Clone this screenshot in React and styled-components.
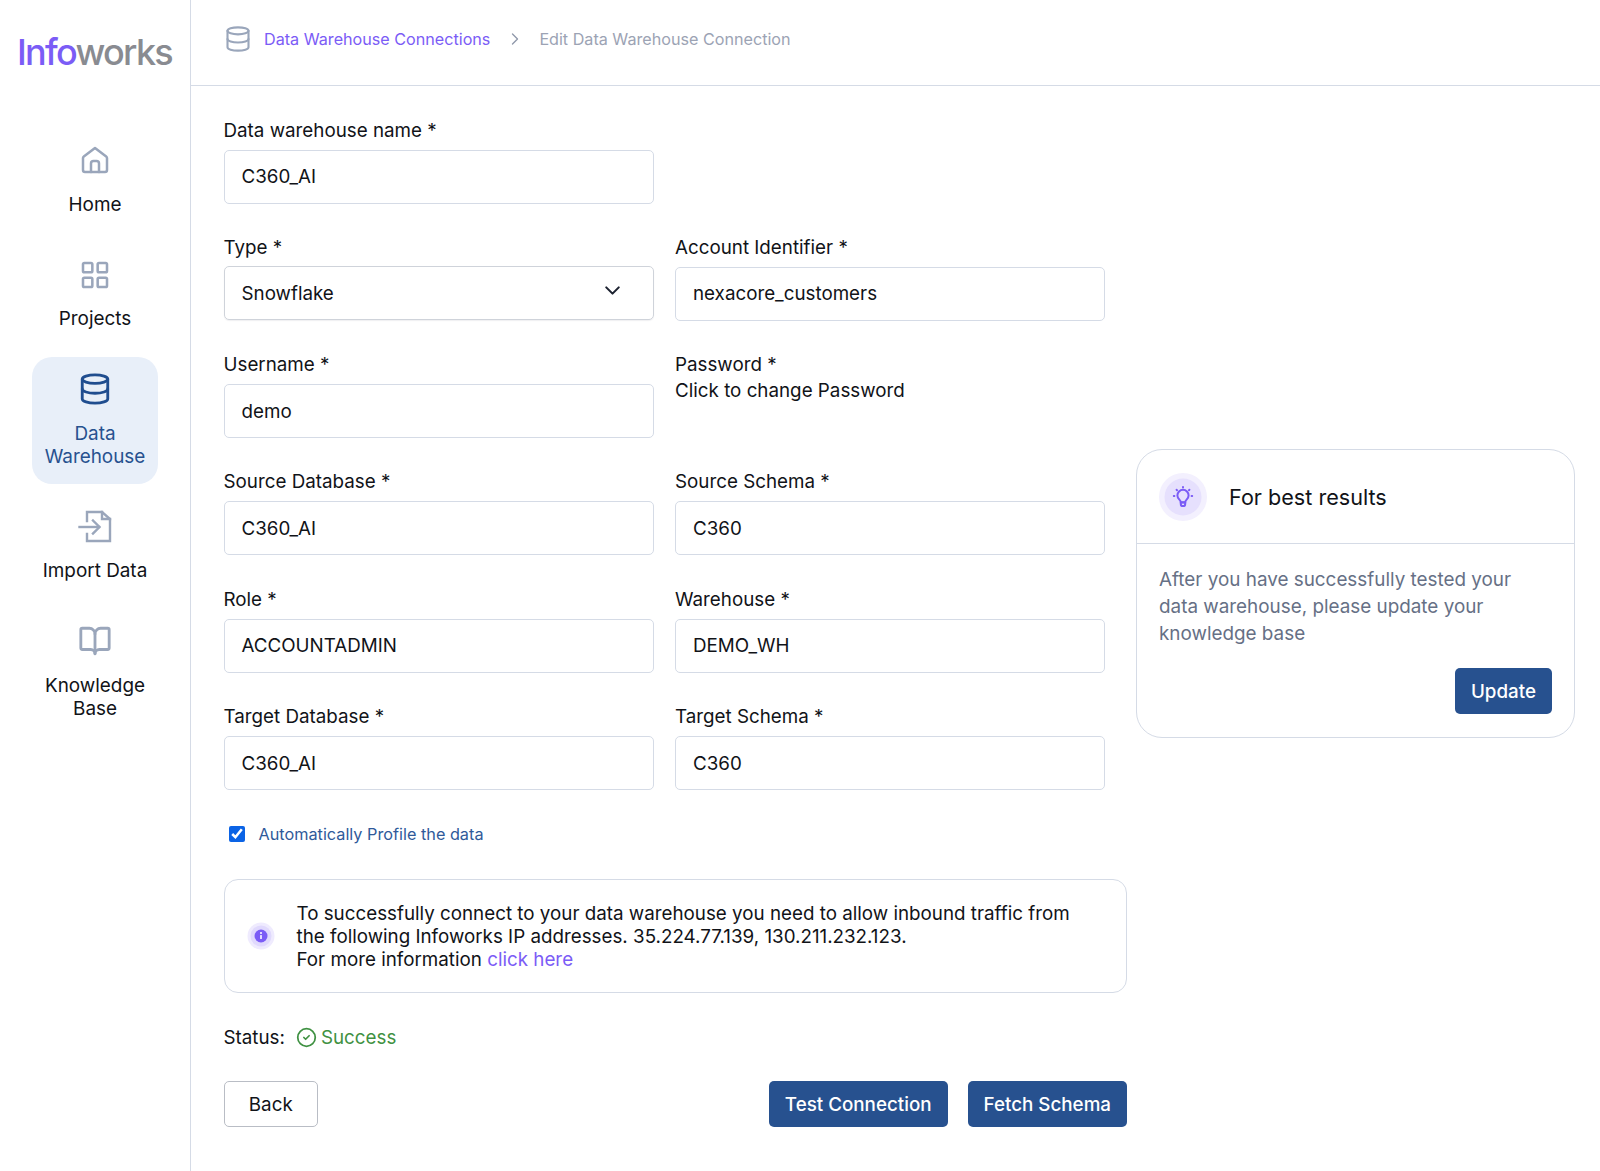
import React from "react";
import styled, { createGlobalStyle } from "styled-components";
import { ChevronDown, ChevronRight, CircleCheck, Database, LayoutGrid, BookOpen } from "lucide-react";

const GlobalStyle = createGlobalStyle`
  html, body { margin: 0; padding: 0; background: #fff; }
  body { font-family: Inter, "Noto Sans", sans-serif; color: #111318; }
  * { box-sizing: border-box; }
`;

const Page = styled.div`
  display: flex;
  width: 1600px;
  height: 1171px;
  overflow: hidden;
`;

const Sidebar = styled.aside`
  flex: 0 0 191px;
  border-right: 1.5px solid #d5dbe6;
  display: flex;
  flex-direction: column;
  align-items: center;
`;

const Logo = styled.div`
  height: 102px;
  width: 100%;
  padding: 30px 0 0 17px;
  font-size: 36px;
  line-height: 44px;
  font-weight: 500;
  letter-spacing: -1.7px;
  color: #898b91;
  span { color: #7b5cf6; }
`;

const Nav = styled.nav`
  display: flex;
  flex-direction: column;
  align-items: center;
  width: 126px;
`;

const NavItem = styled.a`
  display: flex;
  flex-direction: column;
  align-items: center;
  width: 126px;
  flex: none;
  height: ${(p) => p.$h}px;
  padding-top: ${(p) => p.$top}px;
  border-radius: 20px;
  background: ${(p) => (p.$active ? "#e8eff9" : "transparent")};
  color: ${(p) => (p.$active ? "#27518f" : "#111318")};
  font-size: 18.9px;
  line-height: 23px;
  text-align: center;
  svg {
    flex: none;
    display: block;
    color: ${(p) => (p.$active ? "#1f4d8f" : "#9aa6bb")};
    margin-bottom: ${(p) => p.$gap}px;
  }
`;

const Main = styled.main`
  flex: 1;
  display: flex;
  flex-direction: column;
`;

const TopBar = styled.header`
  height: 86px;
  flex: none;
  border-bottom: 1.5px solid #d5dbe6;
  display: flex;
  align-items: center;
  padding: 0 0 7px 33px;
  font-size: 16.15px;
  color: #9ca3b4;
`;

const CrumbIcon = styled.span`
  display: flex;
  color: #9aa6bb;
  margin-right: 12px;
`;

const CrumbLink = styled.a`
  color: #7b5cf6;
`;

const CrumbSep = styled.span`
  display: flex;
  margin: 0 14px 0 15px;
  color: #8f98aa;
`;

const Content = styled.div`
  display: flex;
  padding: 32.6px 0 0 32.5px;
`;

const FormColumn = styled.section`
  width: 903.5px;
  flex: none;
`;

const FieldGrid = styled.div`
  display: grid;
  grid-template-columns: 430px 430px;
  column-gap: 21.5px;
  grid-auto-rows: 117.3px;
`;

const Field = styled.div`
  display: flex;
  flex-direction: column;
`;

const Label = styled.label`
  font-size: 18.8px;
  line-height: 24px;
  height: 31px;
`;

const PasswordLabel = styled(Label)`
  height: 25px;
`;

const Hint = styled.div`
  font-size: 18.8px;
  line-height: 26px;
`;

const InputBox = styled.div`
  height: 54px;
  border: 1.5px solid #d5dbe6;
  border-radius: 5px;
  padding: 0 17px;
  display: flex;
  align-items: center;
  justify-content: space-between;
  font-size: 18.8px;
`;

const SelectBox = styled(InputBox)`
  margin-top: -1px;
  padding-top: 2px;
  padding-right: 28px;
  border-color: #cfd3da;
  box-shadow: 0 1px 1px rgba(60, 70, 90, 0.08);
  svg { color: #1c2230; margin-top: -7px; }
`;

const CheckRow = styled.label`
  display: flex;
  align-items: center;
  margin: 0 0 0 5px;
  height: 24px;
  font-size: 16.25px;
  color: #2f5a9a;
  input {
    width: 16px;
    height: 16px;
    margin: 0 14px 0 0;
    accent-color: #0b63e5;
  }
`;

const InfoBox = styled.div`
  margin-top: 33px;
  height: 114px;
  border: 1.5px solid #d5dbe6;
  border-radius: 14px;
  display: flex;
  align-items: center;
  padding: 0 20px 0 22px;
  font-size: 18.8px;
  line-height: 23px;
`;

const InfoIcon = styled.span`
  flex: none;
  width: 28px;
  height: 28px;
  margin-right: 22px;
  display: block;
`;

const TextLink = styled.a`
  color: #7b5cf6;
`;

const StatusRow = styled.div`
  display: flex;
  align-items: center;
  margin-top: 32px;
  height: 24px;
  font-size: 18.8px;
`;

const StatusValue = styled.span`
  display: flex;
  align-items: center;
  gap: 4px;
  margin-left: 11px;
  color: #3f9142;
`;

const ActionRow = styled.div`
  display: flex;
  margin-top: 32px;
  gap: 20px;
`;

const Button = styled.button`
  height: 46px;
  padding: 0 16px;
  border-radius: 5px;
  border: none;
  background: #27518f;
  color: #fff;
  font-family: inherit;
  font-size: 18.8px;
  font-weight: 500;
`;

const BackButton = styled(Button)`
  width: 94.5px;
  margin-right: auto;
  padding: 0;
  background: #fff;
  color: #111318;
  font-weight: 400;
  border: 1.5px solid #b9bdc5;
`;

const TipCard = styled.aside`
  flex: none;
  width: 439px;
  height: 289px;
  margin: 330.5px 0 0 9px;
  border: 1.5px solid #d5dbe6;
  border-radius: 26px;
  display: flex;
  flex-direction: column;
`;

const TipHeader = styled.div`
  height: 94px;
  flex: none;
  display: flex;
  align-items: center;
  padding-left: 22px;
  border-bottom: 1.5px solid #d5dbe6;
  font-size: 21.6px;
`;

const TipIcon = styled.span`
  display: block;
  flex: none;
  width: 48px;
  height: 48px;
  margin-right: 22px;
`;

const TipBody = styled.p`
  margin: 0;
  padding: 22px 22px 0;
  font-size: 18.87px;
  line-height: 27px;
  color: #667085;
`;

const TipFooter = styled.div`
  display: flex;
  justify-content: flex-end;
  padding: 21px 22px 0 0;
`;

const HomeIcon = () => (
  <svg width="30" height="30" viewBox="0 0 30 30" fill="none" stroke="currentColor" strokeWidth="2.5" strokeLinejoin="round" strokeLinecap="round">
    <path d="M15 3 L3.8 11.5 a2 2 0 0 0 -.8 1.6 V25 a2 2 0 0 0 2 2 H25 a2 2 0 0 0 2 -2 V13.1 a2 2 0 0 0 -.8 -1.6 Z" />
    <path d="M11 27 V18.5 a2.5 2.5 0 0 1 2.5 -2.5 h3 a2.5 2.5 0 0 1 2.5 2.5 V27" />
  </svg>
);

const ImportIcon = () => (
  <svg width="34" height="34" viewBox="0 0 34 34" fill="none" stroke="currentColor" strokeWidth="2.4" strokeLinejoin="miter" strokeLinecap="square">
    <path d="M9 11 V2 H24 L32 9 V31 H9 V24" />
    <path d="M24 2 V9 H32" />
    <path d="M1.5 17 H21" />
    <path d="M15 10.5 L21.5 17 L15 23.5" />
  </svg>
);

const BulbBadge = () => (
  <svg width="48" height="48" viewBox="0 0 48 48" fill="none">
    <circle cx="24" cy="24" r="24" fill="#f3f0fe" />
    <circle cx="24" cy="24" r="18.5" fill="#e6e0fd" />
    <g stroke="#7b5cf6" strokeWidth="2" strokeLinecap="round" fill="none">
      <path d="M21.8 29.2 c0 -2.4 -3.4 -3 -3.4 -6.8 a5.6 5.6 0 0 1 11.2 0 c0 3.8 -3.4 4.4 -3.4 6.8 Z" />
      <path d="M21.8 29.5 h4.4 v1.4 a2.2 2.2 0 0 1 -4.4 0 Z" />
      <path d="M24 14 v.6 M14.8 23 h.6 M32.6 23 h.6 M17.6 16.8 l.4 .4 M30.4 16.8 l-.4 .4" />
    </g>
  </svg>
);

const InfoBadge = () => (
  <svg width="28" height="28" viewBox="0 0 28 28">
    <circle cx="14" cy="14" r="13.5" fill="#efebfe" />
    <circle cx="14" cy="14" r="10.5" fill="#e0d9fd" />
    <circle cx="14" cy="14" r="6.5" fill="#7b5cf6" />
    <rect x="13.2" y="13" width="1.6" height="4" rx=".6" fill="#fff" />
    <circle cx="14" cy="11" r="1" fill="#fff" />
  </svg>
);

const fields = [
  ["Type *", "Snowflake", "Account Identifier *", "nexacore_customers"],
  ["Username *", "demo", "Password *", null],
  ["Source Database *", "C360_AI", "Source Schema *", "C360"],
  ["Role *", "ACCOUNTADMIN", "Warehouse *", "DEMO_WH"],
  ["Target Database *", "C360_AI", "Target Schema *", "C360"],
];

export default function App() {
  return (
    <Page>
      <GlobalStyle />
      <Sidebar>
        <Logo><span>Info</span>works</Logo>
        <Nav>
          <NavItem $h={114} $top={43} $gap={18}><HomeIcon />Home</NavItem>
          <NavItem $h={141} $top={43} $gap={16}><LayoutGrid size={32} strokeWidth={1.9} />Projects</NavItem>
          <NavItem $active $h={127} $top={15} $gap={16}><Database size={34} strokeWidth={2} />Data<br />Warehouse</NavItem>
          <NavItem $h={114} $top={26} $gap={15}><ImportIcon />Import Data</NavItem>
          <NavItem $h={127} $top={26} $gap={16}><BookOpen size={34} strokeWidth={2} />Knowledge<br />Base</NavItem>
        </Nav>
      </Sidebar>
      <Main>
        <TopBar>
          <CrumbIcon><Database size={28} strokeWidth={1.8} /></CrumbIcon>
          <CrumbLink>Data Warehouse Connections</CrumbLink>
          <CrumbSep><ChevronRight size={20} strokeWidth={1.6} /></CrumbSep>
          <span>Edit Data Warehouse Connection</span>
        </TopBar>
        <Content>
          <FormColumn>
            <FieldGrid>
              <Field>
                <Label>Data warehouse name *</Label>
                <InputBox>C360_AI</InputBox>
              </Field>
              <div />
              {fields.map(([l1, v1, l2, v2]) => (
                <React.Fragment key={l1}>
                  <Field>
                    <Label>{l1}</Label>
                    {l1 === "Type *" ? (
                      <SelectBox>{v1}<ChevronDown size={25} strokeWidth={2} /></SelectBox>
                    ) : (
                      <InputBox>{v1}</InputBox>
                    )}
                  </Field>
                  <Field>
                    {v2 ? <Label>{l2}</Label> : <PasswordLabel>{l2}</PasswordLabel>}
                    {v2 ? <InputBox>{v2}</InputBox> : <Hint>Click to change Password</Hint>}
                  </Field>
                </React.Fragment>
              ))}
            </FieldGrid>
            <CheckRow>
              <input type="checkbox" defaultChecked />
              Automatically Profile the data
            </CheckRow>
            <InfoBox>
              <InfoIcon><InfoBadge /></InfoIcon>
              <div>
                To successfully connect to your data warehouse you need to allow inbound traffic from<br />
                the following Infoworks IP addresses. 35.224.77.139, 130.211.232.123.<br />
                For more information <TextLink>click here</TextLink>
              </div>
            </InfoBox>
            <StatusRow>
              Status:
              <StatusValue><CircleCheck size={21} strokeWidth={2} />Success</StatusValue>
            </StatusRow>
            <ActionRow>
              <BackButton>Back</BackButton>
              <Button>Test Connection</Button>
              <Button>Fetch Schema</Button>
            </ActionRow>
          </FormColumn>
          <TipCard>
            <TipHeader>
              <TipIcon><BulbBadge /></TipIcon>
              For best results
            </TipHeader>
            <TipBody>
              After you have successfully tested your<br />
              data warehouse, please update your<br />
              knowledge base
            </TipBody>
            <TipFooter><Button>Update</Button></TipFooter>
          </TipCard>
        </Content>
      </Main>
    </Page>
  );
}
